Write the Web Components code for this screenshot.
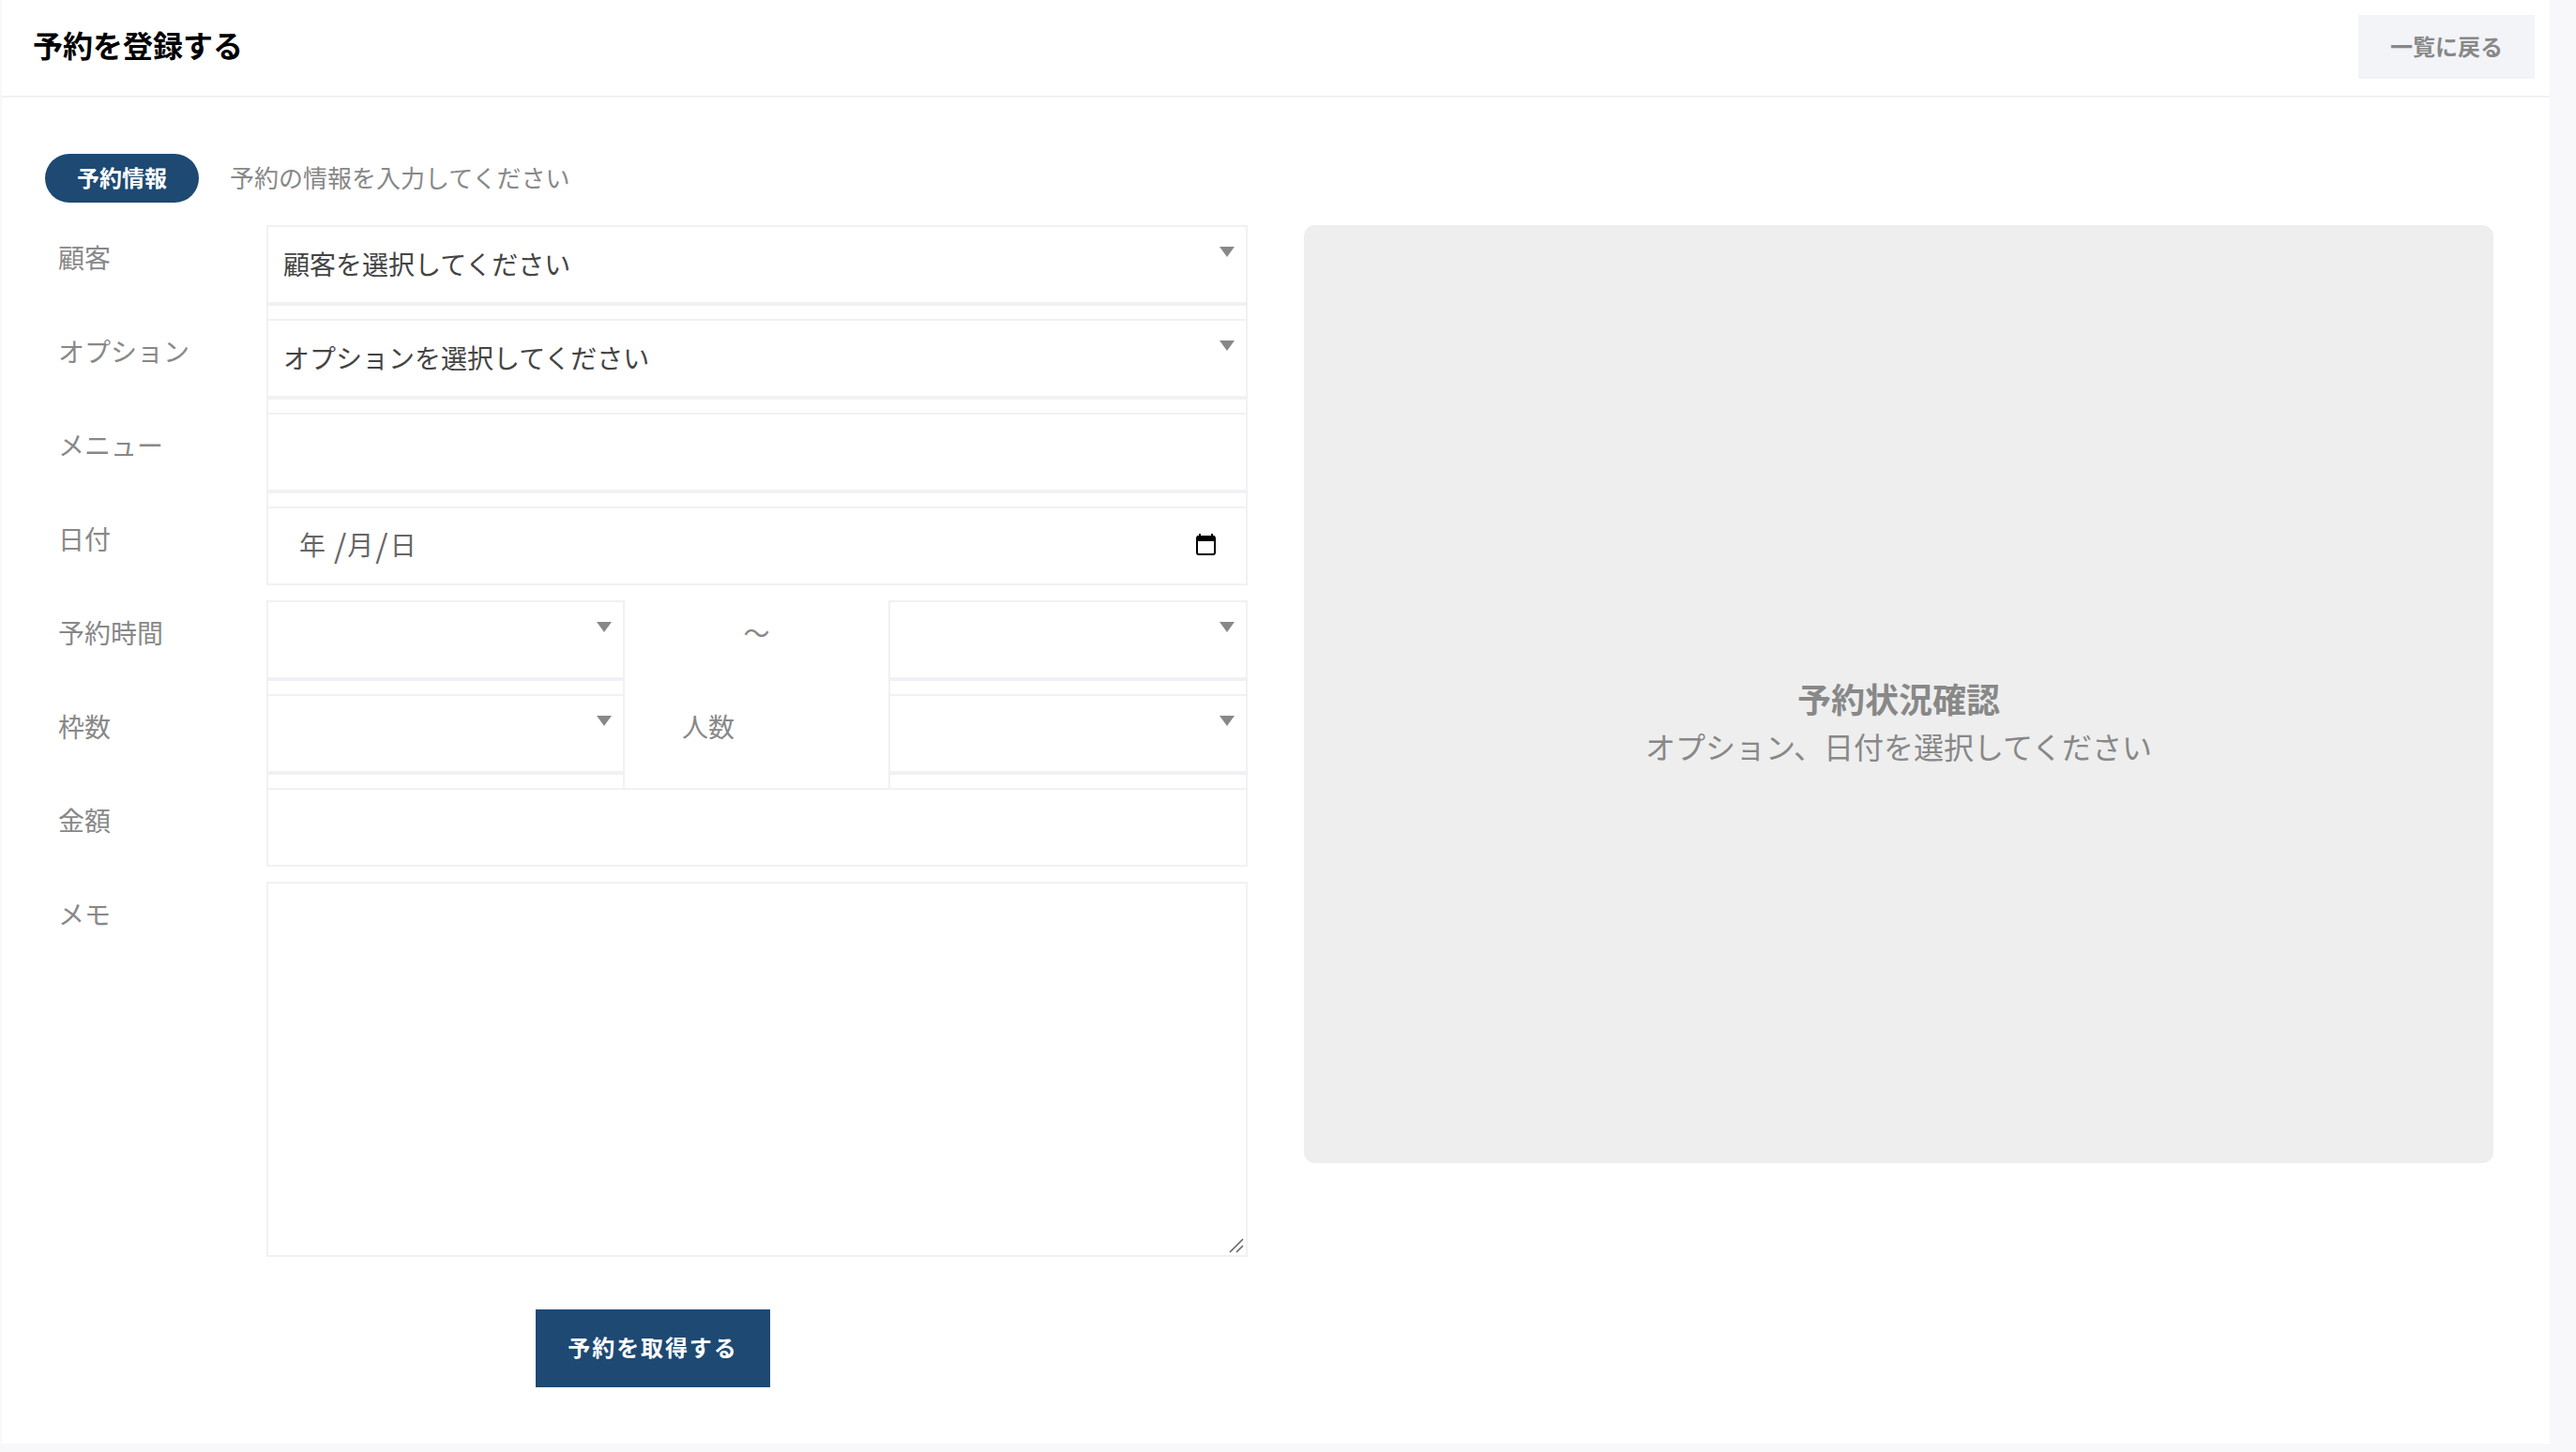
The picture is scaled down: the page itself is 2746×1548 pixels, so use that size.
<!DOCTYPE html>
<html lang="ja">
<head>
<meta charset="utf-8">
<title>予約を登録する</title>
<style>
  html, body { margin: 0; height: 100%; background: #f8f7fa; }
  body {
    font-family: "Noto Sans CJK JP", "Noto Sans", sans-serif;
    color: #888;
    overflow: hidden;
  }
  .columns { display: flex; gap: 60px; align-items: flex-start; }
  .form { display: block; width: 1282px; flex: none; }
  .date { display: flex; align-items: center; height: 40px; margin-top: -4px; }
  .date i { font-style: normal; font-size: 34px; font-weight: 400; margin: 0 2px; }
  .date i:first-of-type { margin: 0 1px 0 9px; }
  .date svg { display: block; }
</style>
</head>
<body>

<!-- Outer white sheet -->
<template id="page-sheet-template">
  <style>
    :host {
      display: block;
      box-sizing: border-box;
      width: 2716px;
      height: 1539px;
      margin-left: 2px;
      background: #fff;
    }
    .body { padding: 60px 60px 0 46px; }
  </style>
  <slot name="head"></slot>
  <div class="body"><slot></slot></div>
</template>

<!-- Title bar with its back button -->
<template id="page-head-template">
  <style>
    :host {
      display: flex;
      box-sizing: border-box;
      height: 104px;
      padding: 0 16px 2px 33px;
      align-items: center;
      justify-content: space-between;
      border-bottom: 2px solid #f1f1f5;
    }
    h1 { margin: 0 0 6px; font-size: 32px; line-height: 48px; font-weight: 700; color: #000; }
    a {
      display: flex;
      box-sizing: border-box;
      width: 188px;
      height: 68px;
      padding-bottom: 4px;
      align-items: center;
      justify-content: center;
      background: #f3f4f8;
      color: #888;
      font-size: 24px;
      font-weight: 700;
    }
  </style>
  <h1><slot></slot></h1>
  <a><slot name="action"></slot></a>
</template>

<!-- Section pill and hint -->
<template id="section-head-template">
  <style>
    :host {
      display: flex;
      height: 52px;
      margin-bottom: 24px;
      align-items: center;
      gap: 33px;
    }
    .pill {
      display: flex;
      box-sizing: border-box;
      width: 164px;
      height: 52px;
      padding-bottom: 4px;
      align-items: center;
      justify-content: center;
      border-radius: 26px;
      background: #1d4973;
      color: #fff;
      font-size: 24px;
      font-weight: 700;
    }
    .hint { margin-top: -3px; font-size: 26px; color: #888; }
  </style>
  <span class="pill"><slot name="pill"></slot></span>
  <span class="hint"><slot></slot></span>
</template>

<!-- One form row: label on the left, controls on the right -->
<template id="form-row-template">
  <style>
    :host { display: flex; height: 100px; }
    :host([tall]) { height: auto; }
    .label {
      box-sizing: border-box;
      width: 236px;
      flex: none;
      padding: 13px 0 0 14px;
      font-size: 28px;
      line-height: 42px;
      color: #888;
    }
    .controls { display: flex; flex: 1; min-width: 0; }
  </style>
  <div class="label"><slot name="label"></slot></div>
  <div class="controls"><slot></slot></div>
</template>

<!-- Select look-alike. The side borders run on to the next row -->
<template id="select-field-template">
  <style>
    :host {
      display: block;
      position: relative;
      box-sizing: border-box;
      flex: 1;
      height: 100px;
      border: 2px solid #f1f1f5;
      border-bottom: 0;
      color: #444;
      font-size: 28px;
    }
    :host([narrow]) { flex: none; width: 382px; }
    :host([wide]) { flex: none; width: 383px; }
    .box {
      display: flex;
      box-sizing: border-box;
      height: 84px;
      padding: 0 0 2px 16px;
      align-items: center;
      border-bottom: 4px solid #f1f1f5;
    }
    .arrow {
      position: absolute;
      top: 21px;
      right: 12px;
      width: 0;
      height: 0;
      border-left: 8px solid transparent;
      border-right: 8px solid transparent;
      border-top: 11px solid #888;
    }
  </style>
  <div class="box"><slot></slot></div>
  <span class="arrow"></span>
</template>

<!-- Plain single line input box -->
<template id="text-field-template">
  <style>
    :host {
      display: flex;
      box-sizing: border-box;
      flex: 1;
      height: 84px;
      padding: 0 32px 0 33px;
      align-items: center;
      justify-content: space-between;
      border: 2px solid #f1f1f5;
      color: #666;
      font-size: 28px;
    }
  </style>
  <slot></slot>
</template>

<!-- Text between two selects -->
<template id="mid-label-template">
  <style>
    :host {
      display: block;
      box-sizing: border-box;
      width: 281px;
      flex: none;
      padding: 13px 0 0 61px;
      font-size: 28px;
      line-height: 42px;
      color: #888;
    }
    :host([center]) { padding-left: 0; text-align: center; }
  </style>
  <slot></slot>
</template>

<!-- Memo box with its drag handle -->
<template id="memo-field-template">
  <style>
    :host {
      display: block;
      position: relative;
      box-sizing: border-box;
      flex: 1;
      height: 400px;
      border: 2px solid #f1f1f5;
    }
    svg { position: absolute; right: 2px; bottom: 2px; }
  </style>
  <svg width="16" height="16" viewBox="0 0 16 16">
    <path d="M1 15 L15 1 M8 15 L15 8" stroke="#666" stroke-width="1.6" fill="none"/>
  </svg>
</template>

<!-- Submit button -->
<template id="submit-button-template">
  <style>
    :host {
      display: flex;
      box-sizing: border-box;
      width: 250px;
      height: 83px;
      margin: 56px 0 0 523px;
      padding-bottom: 5px;
      align-items: center;
      justify-content: center;
      background: #1d4973;
      color: #fff;
      font-size: 24px;
      font-weight: 700;
      letter-spacing: 1.9px;
    }
  </style>
  <slot></slot>
</template>

<!-- Grey availability panel -->
<template id="status-panel-template">
  <style>
    :host {
      display: flex;
      box-sizing: border-box;
      flex: none;
      width: 1268px;
      height: 1000px;
      padding-top: 56px;
      flex-direction: column;
      align-items: center;
      justify-content: center;
      border-radius: 12px;
      background: #eee;
      color: #888;
    }
    .title { font-size: 36px; line-height: 52px; font-weight: 700; }
    .text { margin-top: 1px; font-size: 32px; line-height: 48px; }
  </style>
  <div class="title"><slot name="title"></slot></div>
  <div class="text"><slot></slot></div>
</template>

<page-sheet>
  <page-head slot="head">予約を登録する<span slot="action">一覧に戻る</span></page-head>
  <section-head><span slot="pill">予約情報</span>予約の情報を入力してください</section-head>
  <div class="columns">
    <div class="form">
      <form-row><span slot="label">顧客</span><select-field>顧客を選択してください</select-field></form-row>
      <form-row><span slot="label">オプション</span><select-field>オプションを選択してください</select-field></form-row>
      <form-row><span slot="label">メニュー</span><select-field no-arrow></select-field></form-row>
      <form-row><span slot="label">日付</span>
        <text-field>
          <span class="date">年<i>/</i>月<i>/</i>日</span>
          <span class="date">
            <svg width="21" height="23" viewBox="0 0 21 23">
              <path d="M4 0v3M17 0v3" stroke="#000" stroke-width="2"/>
              <rect x="1" y="3" width="19" height="19" rx="2" fill="none" stroke="#000" stroke-width="2"/>
              <rect x="1" y="2" width="19" height="6" fill="#000"/>
            </svg>
          </span>
        </text-field>
      </form-row>
      <form-row><span slot="label">予約時間</span>
        <select-field narrow></select-field>
        <mid-label center>〜</mid-label>
        <select-field wide></select-field>
      </form-row>
      <form-row><span slot="label">枠数</span>
        <select-field narrow></select-field>
        <mid-label>人数</mid-label>
        <select-field wide></select-field>
      </form-row>
      <form-row><span slot="label">金額</span><text-field></text-field></form-row>
      <form-row tall><span slot="label">メモ</span><memo-field></memo-field></form-row>
      <submit-button>予約を取得する</submit-button>
    </div>
    <status-panel><span slot="title">予約状況確認</span>オプション、日付を選択してください</status-panel>
  </div>
</page-sheet>

<script>
/**
 * Base for all the elements of the page: clones the template of the same name.
 */
class TemplateElement extends HTMLElement {
  /**
   * Constructor.
   */
  constructor() {
    super()
    const template = document.getElementById(this.localName + "-template")
    this.attachShadow({ mode: "open" }).appendChild(template.content.cloneNode(true))
  }
}

/**
 * A select box. The arrow goes away with the no-arrow attribute.
 */
class SelectField extends TemplateElement {
  connectedCallback() {
    if(this.hasAttribute("no-arrow")) {
      this.shadowRoot.querySelector(".arrow").remove()
    }
  }
}

customElements.define("select-field", SelectField)

const names = ["page-sheet", "page-head", "section-head", "form-row", "text-field",
  "mid-label", "memo-field", "submit-button", "status-panel"]

names.forEach(name => customElements.define(name, class extends TemplateElement {}))
</script>
</body>
</html>
